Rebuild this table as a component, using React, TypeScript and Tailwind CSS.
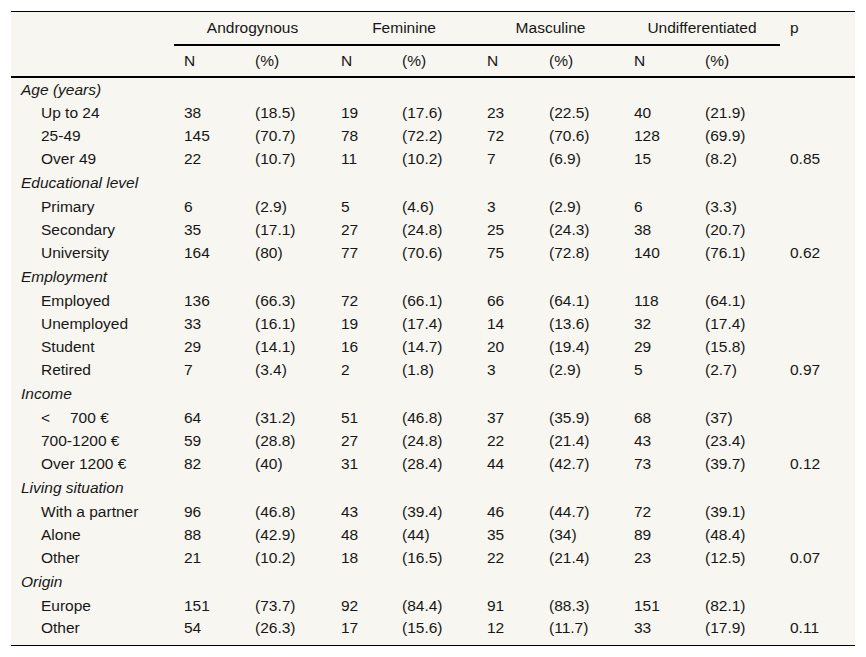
import { Fragment } from 'react'

type Row = { label: string; values: string[]; p?: string }
type Section = { title: string; rows: Row[] }

const sections: Section[] = [
  {
    title: 'Age (years)',
    rows: [
      { label: 'Up to 24', values: ['38', '(18.5)', '19', '(17.6)', '23', '(22.5)', '40', '(21.9)'] },
      { label: '25-49', values: ['145', '(70.7)', '78', '(72.2)', '72', '(70.6)', '128', '(69.9)'] },
      { label: 'Over 49', values: ['22', '(10.7)', '11', '(10.2)', '7', '(6.9)', '15', '(8.2)'], p: '0.85' },
    ],
  },
  {
    title: 'Educational level',
    rows: [
      { label: 'Primary', values: ['6', '(2.9)', '5', '(4.6)', '3', '(2.9)', '6', '(3.3)'] },
      { label: 'Secondary', values: ['35', '(17.1)', '27', '(24.8)', '25', '(24.3)', '38', '(20.7)'] },
      { label: 'University', values: ['164', '(80)', '77', '(70.6)', '75', '(72.8)', '140', '(76.1)'], p: '0.62' },
    ],
  },
  {
    title: 'Employment',
    rows: [
      { label: 'Employed', values: ['136', '(66.3)', '72', '(66.1)', '66', '(64.1)', '118', '(64.1)'] },
      { label: 'Unemployed', values: ['33', '(16.1)', '19', '(17.4)', '14', '(13.6)', '32', '(17.4)'] },
      { label: 'Student', values: ['29', '(14.1)', '16', '(14.7)', '20', '(19.4)', '29', '(15.8)'] },
      { label: 'Retired', values: ['7', '(3.4)', '2', '(1.8)', '3', '(2.9)', '5', '(2.7)'], p: '0.97' },
    ],
  },
  {
    title: 'Income',
    rows: [
      { label: '<700', values: ['64', '(31.2)', '51', '(46.8)', '37', '(35.9)', '68', '(37)'] },
      { label: '700-1200 €', values: ['59', '(28.8)', '27', '(24.8)', '22', '(21.4)', '43', '(23.4)'] },
      { label: 'Over 1200 €', values: ['82', '(40)', '31', '(28.4)', '44', '(42.7)', '73', '(39.7)'], p: '0.12' },
    ],
  },
  {
    title: 'Living situation',
    rows: [
      { label: 'With a partner', values: ['96', '(46.8)', '43', '(39.4)', '46', '(44.7)', '72', '(39.1)'] },
      { label: 'Alone', values: ['88', '(42.9)', '48', '(44)', '35', '(34)', '89', '(48.4)'] },
      { label: 'Other', values: ['21', '(10.2)', '18', '(16.5)', '22', '(21.4)', '23', '(12.5)'], p: '0.07' },
    ],
  },
  {
    title: 'Origin',
    rows: [
      { label: 'Europe', values: ['151', '(73.7)', '92', '(84.4)', '91', '(88.3)', '151', '(82.1)'] },
      { label: 'Other', values: ['54', '(26.3)', '17', '(15.6)', '12', '(11.7)', '33', '(17.9)'], p: '0.11' },
    ],
  },
]

const groups = ['Androgynous', 'Feminine', 'Masculine', 'Undifferentiated']

export default function App() {
  return (
    <div className="min-h-screen bg-white pl-[11px] pt-[11px]">
      <table
        className="w-[844px] table-fixed border-separate border-spacing-0 border-y border-black bg-[#f8f6f1] text-[15.5px] leading-[18px] text-[#161616]"
        style={{ fontFamily: '"Liberation Sans", Arial, sans-serif' }}
      >
        <colgroup>
          <col className="w-[163px]" />
          <col className="w-[71px]" />
          <col className="w-[86px]" />
          <col className="w-[61px]" />
          <col className="w-[85px]" />
          <col className="w-[62px]" />
          <col className="w-[85px]" />
          <col className="w-[71px]" />
          <col className="w-[85px]" />
          <col className="w-[75px]" />
        </colgroup>
        <thead>
          <tr className="h-[34px]">
            <th rowSpan={2} className="border-b-2 border-black" />
            {groups.map((g) => (
              <th key={g} colSpan={2} className="border-b-2 border-black text-center align-middle font-normal">
                {g}
              </th>
            ))}
            <th rowSpan={2} className="border-b-2 border-black pl-[10px] pt-[7px] text-left align-top font-normal">
              p
            </th>
          </tr>
          <tr className="h-[32px]">
            {groups.map((g) => (
              <Fragment key={g}>
                <th className="border-b-2 border-black pl-[10px] text-left font-normal">N</th>
                <th className="border-b-2 border-black pl-[10px] text-left font-normal">(%)</th>
              </Fragment>
            ))}
          </tr>
        </thead>
        <tbody>
          {sections.map((s, si) => (
            <Fragment key={s.title}>
              <tr className={si === 0 ? 'h-[23px]' : 'h-[25px]'}>
                <td colSpan={10} className="pl-[10px] align-middle italic">
                  {s.title}
                </td>
              </tr>
              {s.rows.map((r, ri) => {
                const last = si === sections.length - 1 && ri === s.rows.length - 1
                const cell = last ? 'align-top pt-[2px]' : 'align-middle'
                return (
                  <tr key={r.label} className={last ? 'h-[28px]' : 'h-[23px]'}>
                    <td className={`pl-[30px] ${cell}`}>
                      {r.label === '<700' ? (
                        <>
                          <span className="inline-block w-[29px]">&lt;</span>700 €
                        </>
                      ) : (
                        r.label
                      )}
                    </td>
                    {r.values.map((v, vi) => (
                      <td key={vi} className={`pl-[10px] ${cell}`}>
                        {v}
                      </td>
                    ))}
                    <td className={`pl-[10px] ${cell}`}>{r.p ?? ''}</td>
                  </tr>
                )
              })}
            </Fragment>
          ))}
        </tbody>
      </table>
    </div>
  )
}
